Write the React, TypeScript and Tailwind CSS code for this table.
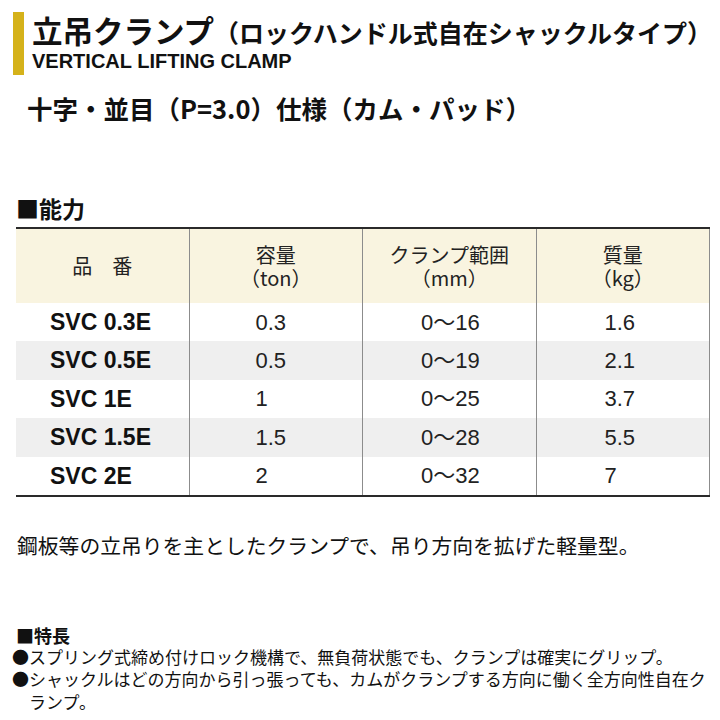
import React from "react";

const jp = { fontFamily: '"Noto Sans CJK JP", "Noto Sans", sans-serif' };
const lat = { fontFamily: '"Liberation Sans", "Noto Sans CJK JP", sans-serif' };

const rows = [
  ["SVC 0.3E", "0.3", "0～16", "1.6"],
  ["SVC 0.5E", "0.5", "0～19", "2.1"],
  ["SVC 1E", "1", "0～25", "3.7"],
  ["SVC 1.5E", "1.5", "0～28", "5.5"],
  ["SVC 2E", "2", "0～32", "7"],
];

const heads: [string, string][] = [
  ["容量", "（ton）"],
  ["クランプ範囲", "（mm）"],
  ["質量", "（kg）"],
];

export default function App() {
  return (
    <div className="w-[720px] h-[720px] bg-white overflow-hidden text-[#111]" style={jp}>
      {/* Title block */}
      <div className="flex pl-[13px] pt-[12px]">
        <div className="w-[11px] bg-[#d5b21a]" />
        <div className="ml-[8px] flex flex-col">
          <div className="h-[36px] leading-[36px] font-bold whitespace-nowrap">
            <span className="text-[30.5px]">立吊クランプ</span>
            <span className="text-[25px]">（ロックハンドル式自在シャックルタイプ）</span>
          </div>
          <div className="h-[27px] leading-[27px] text-[20px] font-bold" style={lat}>
            VERTICAL LIFTING CLAMP
          </div>
        </div>
      </div>

      <div className="mt-[16px] pl-[27px] h-[34px] leading-[34px] text-[25.5px] font-bold whitespace-nowrap">
        十字・並目（P=3.0）仕様（カム・パッド）
      </div>

      <div className="mt-[68px] pl-[16px] h-[30px] leading-[30px] text-[23px] font-bold">■能力</div>

      {/* Table */}
      <div className="mt-[4px] ml-[16px] w-[694px] border-t-2 border-b-2 border-[#2a2a2a]">
        <div className="grid grid-cols-4 h-[74px] bg-[#f9f4e0] text-[20px] text-[#222]">
          <div className="flex items-center justify-center border-r border-[#8c8c8c]">品　番</div>
          {heads.map(([a, b]) => (
            <div key={a} className="flex items-center justify-center border-r border-[#8c8c8c]">
              <div className="text-center leading-[23px]">
                {a}
                <br />
                {b}
              </div>
            </div>
          ))}
        </div>
        {rows.map((r, i) => (
          <div
            key={r[0]}
            className={`grid grid-cols-4 h-[38.4px] ${i % 2 === 1 ? "bg-[#efefef]" : "bg-white"}`}
            style={lat}
          >
            <div className="flex items-center pl-[34px] border-r border-[#8c8c8c] text-[23px] font-bold">
              {r[0]}
            </div>
            <div className="flex items-center pl-[66px] border-r border-[#8c8c8c] text-[22px] text-[#222]">
              {r[1]}
            </div>
            <div className="flex items-center pl-[58px] border-r border-[#8c8c8c] text-[22px] text-[#222]">
              {r[2]}
            </div>
            <div className="flex items-center pl-[68px] border-r border-[#8c8c8c] text-[22px] text-[#222]">
              {r[3]}
            </div>
          </div>
        ))}
      </div>

      <div className="mt-[33px] pl-[17px] h-[30px] leading-[30px] text-[20.8px] whitespace-nowrap">
        鋼板等の立吊りを主としたクランプで、吊り方向を拡げた軽量型。
      </div>

      <div className="mt-[64px] pl-[16px] h-[22px] leading-[22px] text-[18px] font-bold">■特長</div>

      <div className="pl-[12px] text-[17px] leading-[22.5px]">
        <div className="flex">
          <span className="w-[17px] shrink-0">●</span>
          <span className="w-[682px]">スプリング式締め付けロック機構で、無負荷状態でも、クランプは確実にグリップ。</span>
        </div>
        <div className="flex">
          <span className="w-[17px] shrink-0">●</span>
          <span className="w-[682px]">シャックルはどの方向から引っ張っても、カムがクランプする方向に働く全方向性自在クランプ。</span>
        </div>
      </div>
    </div>
  );
}
